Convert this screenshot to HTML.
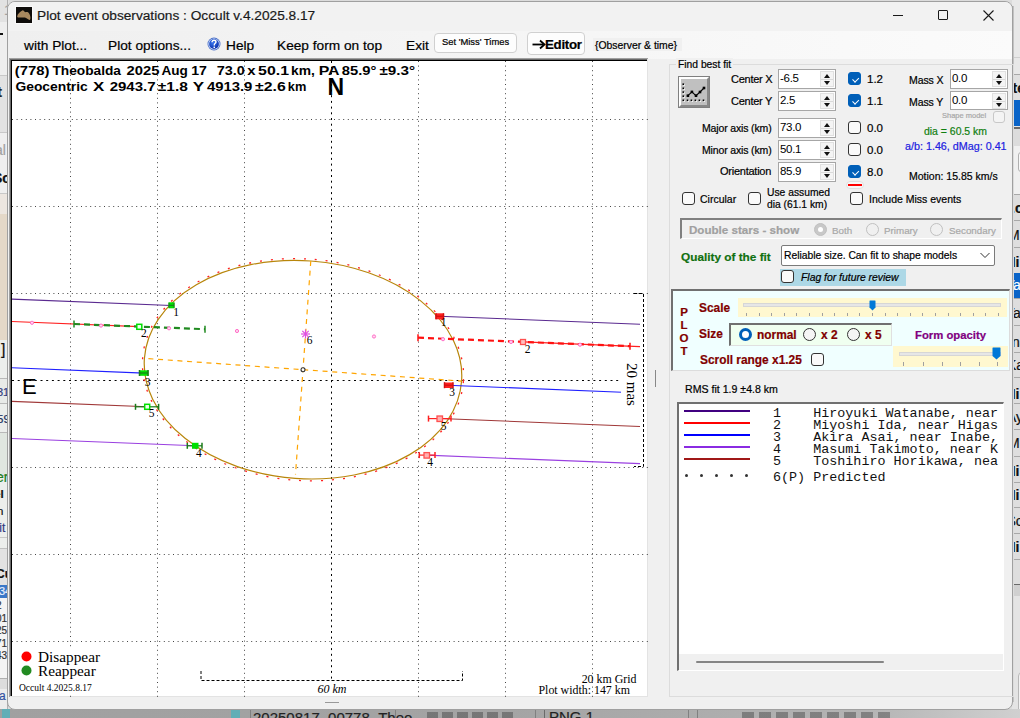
<!DOCTYPE html>
<html><head><meta charset="utf-8">
<style>
*{margin:0;padding:0;box-sizing:border-box}
html,body{width:1020px;height:718px;overflow:hidden;background:#dcdcdc;font-family:"Liberation Sans",sans-serif;position:relative}
.a{position:absolute;white-space:nowrap}
.t{position:absolute;white-space:nowrap;font-family:"Liberation Sans",sans-serif;color:#000;line-height:1;-webkit-text-stroke:0.2px currentColor}
.num{position:absolute;background:#fff;border:1px solid #a6a6a6;height:20px;width:58px}
.num .v{position:absolute;left:1px;top:3px;font-size:11.5px;letter-spacing:-0.3px;line-height:1}
.num .sp{position:absolute;left:41px;top:1px;width:14px;height:16px;background:#f4f4f4;border:1px solid #e0e0e0}
.num .sp i{position:absolute;left:2.5px;width:0;height:0;border-left:3.5px solid transparent;border-right:3.5px solid transparent}
.num .sp i.u{top:2px;border-bottom:4px solid #111}
.num .sp i.d{top:9px;border-top:4px solid #111}
.num .sp b{position:absolute;left:0;top:6.5px;width:12px;height:1px;background:#dadada}
.cb{position:absolute;width:13px;height:13px;border:1px solid #333;border-radius:3px;background:#fafafa}
.cb.on{background:#005fb8;border-color:#005fb8}
.cb.on::after{content:"";position:absolute;left:3px;top:1.5px;width:5px;height:3px;border-left:1.3px solid #fff;border-bottom:1.3px solid #fff;transform:rotate(-45deg) translate(-1px,2px)}
.rb{position:absolute;width:13px;height:13px;border:1px solid #333;border-radius:50%;background:#f5f5f5}
</style></head><body>
<!-- background strips -->
<div class="a" style="left:0;top:0;width:9px;height:22px;background:#e2e2e2"></div>
<div class="t" style="left:4px;top:2px;font-size:15px;color:#a0a0a0">1</div>
<div class="a" style="left:0;top:22px;width:9px;height:53px;background:#eeeeee"></div>
<div class="a" style="left:0;top:33px;width:3px;height:2px;background:#111"></div>
<div class="a" style="left:0;top:75px;width:9px;height:1px;background:#c8c8c8"></div>
<div class="a" style="left:0;top:76px;width:9px;height:56px;background:#e2e2e2;overflow:hidden"><div class="t" style="left:-3px;top:8px;font-size:15px;font-weight:bold;color:#222">t</div></div>
<div class="a" style="left:0;top:132px;width:9px;height:1px;background:#c8c8c8"></div>
<div class="a" style="left:0;top:133px;width:9px;height:60px;background:#efefef;overflow:hidden"><div class="t" style="left:-5px;top:10px;font-size:14px;color:#a0a0a0">al</div><div class="t" style="left:-7px;top:38px;font-size:14px;font-weight:bold;color:#111">Sc</div></div>
<div class="a" style="left:0;top:193px;width:9px;height:1px;background:#c8c8c8"></div>
<div class="a" style="left:0;top:214px;width:9px;height:126px;background:#e4d8c8"></div>
<div class="a" style="left:0;top:194px;width:9px;height:20px;background:#ece6e0"></div>
<div class="a" style="left:0;top:340px;width:8px;height:378px;background:#eceeec;overflow:hidden">
 <div class="t" style="left:1px;top:2px;font-size:16px;color:#111">]</div>
 <div class="a" style="left:0;top:38px;width:8px;height:1px;background:#b8b8b8"></div>
 <div class="a" style="left:0;top:39px;width:8px;height:25px;background:#e8eae8"></div>
 <div class="t" style="left:-3px;top:47px;font-size:11px;color:#303a80">31</div>
 <div class="a" style="left:0;top:63px;width:8px;height:1px;background:#b8b8b8"></div>
 <div class="t" style="left:-3px;top:74px;font-size:11.5px;color:#203060">59</div>
 <div class="a" style="left:0;top:92px;width:8px;height:1px;background:#b8b8b8"></div>
 <div class="a" style="left:0;top:93px;width:8px;height:42px;background:#e0e6e0"></div>
 <div class="a" style="left:0;top:135px;width:8px;height:1px;background:#b0b0b0"></div>
 <div class="t" style="left:-4px;top:130px;font-size:14px;color:#208020">er</div>
 <div class="t" style="left:-6px;top:149px;font-size:11.5px;font-weight:bold;color:#111">el</div>
 <div class="t" style="left:-3px;top:166px;font-size:11.5px;color:#111">n</div>
 <div class="t" style="left:-6px;top:182px;font-size:12px;color:#303a80">llit</div>
 <div class="a" style="left:0;top:197px;width:8px;height:1px;background:#c8c8c8"></div>
 <div class="a" style="left:0;top:209px;width:8px;height:36px;background:#e2e2e2"></div>
 <div class="a" style="left:0;top:208px;width:8px;height:1px;background:#c0c0c0"></div>
 <div class="t" style="left:-4px;top:228px;font-size:12px;font-weight:bold;color:#111">Cu</div>
 <div class="a" style="left:0;top:245px;width:8px;height:13px;background:#3a78c8;overflow:hidden"><div class="t" style="left:-1px;top:1px;font-size:11px;color:#e8f0ff">34</div></div>
 <div class="a" style="left:0;top:258px;width:8px;height:80px;background:#f4f4f4;overflow:hidden"><div class="t" style="left:-4px;top:2px;font-size:10px;line-height:12.5px;color:#333;white-space:pre">2
01
25
71
43</div></div>
 <div class="a" style="left:0;top:338px;width:8px;height:1px;background:#b0b0b0"></div>
 <div class="a" style="left:0;top:339px;width:8px;height:10px;background:#dcdcdc"></div>
 <div class="a" style="left:0;top:349px;width:8px;height:20px;background:#ececec;overflow:hidden"><div class="t" style="left:-1px;top:1px;font-size:12px;color:#3050a0">a</div></div>
</div>
<div class="a" style="left:7px;top:0;width:1px;height:709px;background:#b0b0b0"></div>

<div class="a" style="left:1012px;top:0;width:8px;height:718px;background:#e6e6e6"></div>
<div class="a" style="left:1012px;top:0;width:8px;height:718px;overflow:hidden">
 <div class="a" style="left:0;top:0;width:8px;height:74px;background:#e8e8e8"></div>
 <div class="a" style="left:0;top:57px;width:8px;height:1px;background:#cfcfcf"></div>
 <div class="a" style="left:0;top:74px;width:8px;height:1px;background:#a8a8a8"></div>
 <div class="a" style="left:0;top:75px;width:8px;height:25px;background:#e0e0e0"></div>
 <div class="t" style="left:0.5px;top:80.6px;font-size:14px;font-weight:bold;color:#111">te</div>
 <div class="a" style="left:0;top:100px;width:8px;height:26px;background:#0a64c8"></div>
 <div class="a" style="left:0;top:127px;width:8px;height:2px;background:#6a6a6a"></div>
 <div class="a" style="left:0;top:129px;width:8px;height:17px;background:#dcdcdc"></div>
 <div class="a" style="left:0;top:146px;width:8px;height:48px;background:#f0f0f0"></div>
 <div class="a" style="left:6px;top:152px;width:6px;height:20px;border:1px solid #b0b0b0;border-radius:3px;background:#f8f8f8"></div>
 <div class="a" style="left:0;top:194px;width:8px;height:390px;background:#dedede"></div>
 <div class="a" style="left:0;top:194px;width:8px;height:1px;background:#a8a8a8"></div>
 <div class="a" style="left:0;top:220px;width:8px;height:1px;background:#a8a8a8"></div>
 <div class="a" style="left:0;top:247px;width:8px;height:1px;background:#a8a8a8"></div>
 <div class="a" style="left:0;top:325px;width:8px;height:1px;background:#a8a8a8"></div>
 <div class="a" style="left:0;top:352px;width:8px;height:1px;background:#a8a8a8"></div>
 <div class="a" style="left:0;top:377px;width:8px;height:1px;background:#a8a8a8"></div>
 <div class="a" style="left:0;top:403px;width:8px;height:1px;background:#a8a8a8"></div>
 <div class="a" style="left:0;top:429px;width:8px;height:1px;background:#a8a8a8"></div>
 <div class="a" style="left:0;top:456px;width:8px;height:1px;background:#a8a8a8"></div>
 <div class="a" style="left:0;top:482px;width:8px;height:1px;background:#a8a8a8"></div>
 <div class="a" style="left:0;top:507px;width:8px;height:1px;background:#a8a8a8"></div>
 <div class="a" style="left:0;top:533px;width:8px;height:1px;background:#a8a8a8"></div>
 <div class="a" style="left:0;top:559px;width:8px;height:1px;background:#a8a8a8"></div>
 <div class="a" style="left:0;top:273px;width:8px;height:25px;background:#0a64c8"></div>
 <div class="a" style="left:0;top:298px;width:8px;height:1px;background:#a8a8a8"></div>
 <div class="t" style="left:-1px;top:201px;font-size:14px;font-weight:bold;color:#111">.c</div>
 <div class="t" style="left:-4px;top:228px;font-size:14px;color:#111">Mi</div>
 <div class="t" style="left:-6.5px;top:254.6px;font-size:14px;font-weight:bold;color:#111">Hi</div>
 <div class="t" style="left:-6px;top:278px;font-size:14px;color:#fff">Ta</div>
 <div class="t" style="left:-6px;top:305.7px;font-size:14px;color:#111">Ta</div>
 <div class="t" style="left:0px;top:334.6px;font-size:14px;color:#111">na</div>
 <div class="t" style="left:-5px;top:358px;font-size:14px;color:#111">Ka</div>
 <div class="t" style="left:-6.5px;top:387px;font-size:14px;font-weight:bold;color:#111">Hi</div>
 <div class="t" style="left:-5px;top:409.8px;font-size:14px;color:#111">Ay</div>
 <div class="t" style="left:-4px;top:436px;font-size:14px;color:#111">Mi</div>
 <div class="t" style="left:-6.5px;top:464px;font-size:14px;font-weight:bold;color:#111">Hi</div>
 <div class="t" style="left:-6.5px;top:488px;font-size:14px;font-weight:bold;color:#111">Hi</div>
 <div class="t" style="left:-5.5px;top:514px;font-size:14px;color:#111">Sc</div>
 <div class="t" style="left:-6.5px;top:540px;font-size:14px;font-weight:bold;color:#111">Hi</div>
 <div class="a" style="left:0;top:584px;width:8px;height:1px;background:#6a6a6a"></div>
 <div class="a" style="left:0;top:585px;width:8px;height:11px;background:#d0d0d0"></div>
 <div class="a" style="left:0;top:596px;width:8px;height:122px;background:#e4e4e4"></div>
 <div class="a" style="left:6px;top:672px;width:8px;height:50px;border:1px solid #b8b8b8;border-radius:4px;background:#f2f2f2"></div>
</div>
<div class="a" style="left:1012px;top:6px;width:2px;height:696px;background:linear-gradient(90deg,#9a9a9a,#cfcfcf)"></div>

<div class="a" style="left:0;top:709px;width:1020px;height:9px;background:linear-gradient(90deg,#a0a0a0 0%,#a4a4a4 50%,#b4b4b4 85%,#d0d0d0 100%)"></div>
<div class="a" style="left:2px;top:709px;width:8px;height:9px;background:#62aeb6"></div>
<div class="a" style="left:231px;top:709px;width:9px;height:9px;background:#62aeb6"></div>
<div class="a" style="left:250px;top:709px;width:1px;height:9px;background:#808080"></div>
<div class="a" style="left:0;top:709px;width:1020px;height:9px;overflow:hidden">
 <div class="t" style="left:253px;top:1px;font-size:15px;color:#222">20250817_00778_Theo</div>
 <div class="a" style="left:395px;top:0;width:1px;height:9px;background:#808080"></div>
 <div class="a" style="left:427px;top:3px;width:88px;height:6px;background:repeating-linear-gradient(90deg,#222 0 11px,transparent 11px 15px);opacity:0.35"></div>
 <div class="a" style="left:535px;top:0;width:1px;height:9px;background:#808080"></div>
 <div class="a" style="left:544px;top:0;width:1px;height:9px;background:#6a6a6a"></div>
 <div class="t" style="left:549px;top:0px;font-size:15px;color:#222">PNG 1</div>
 <div class="a" style="left:688px;top:0;width:1px;height:9px;background:#808080"></div>
 <div class="a" style="left:697px;top:0;width:1px;height:9px;background:#808080"></div>
 <div class="a" style="left:742px;top:3px;width:150px;height:6px;background:repeating-linear-gradient(90deg,#222 0 12px,transparent 12px 17px);opacity:0.35"></div>
</div>

<!-- window -->
<div class="a" id="win" style="left:7px;top:1px;width:1006px;height:709px;background:#f0f0f0;border:1px solid #a0a0a0;border-radius:8px;overflow:hidden">
  <div class="a" style="left:0;top:0;width:1006px;height:29px;background:#f2f2f2"></div>
  <div class="a" style="left:0;top:29px;width:1006px;height:28px;background:linear-gradient(90deg,#efefef,#fbfbfb)"></div>
</div>
<!-- title bar -->
<div class="a" style="left:15px;top:6px;width:18px;height:18px;background:#fafafa"></div><div class="a" style="left:16px;top:7px;width:16px;height:16px;background:#0e0c0a"></div>
<svg class="a" style="left:16px;top:7px" width="16" height="16" viewBox="0 0 16 16"><path d="M1.2 9.3C1.5 7 4 5 6.7 3.3C7.5 3.5 8.5 4.5 9.2 5.3C10 4.8 11 4.8 11.6 5.1C13 6 14.2 8 14.4 10.2C14.5 11.5 14.2 12.8 13.8 13C12 12.5 10.5 11 8.9 10.5C7 10.5 4 10.7 2.1 10.5C1.3 10.3 1.1 9.8 1.2 9.3Z" fill="#a8885e"/></svg>
<div class="t" style="left:37px;top:9px;font-size:13.7px;color:#1a1a1a">Plot event observations : Occult v.4.2025.8.17</div>
<div class="a" style="left:893px;top:15px;width:10px;height:1px;background:#1a1a1a"></div>
<div class="a" style="left:938px;top:10px;width:10px;height:10px;border:1px solid #1a1a1a;border-radius:1px"></div>
<svg class="a" style="left:982px;top:9px" width="13" height="13" viewBox="0 0 13 13"><path d="M1.5 1.5L11.5 11.5M11.5 1.5L1.5 11.5" stroke="#1a1a1a" stroke-width="1.1"/></svg>
<!-- menu -->
<div class="t" style="left:24px;top:39px;font-size:13.7px">with Plot...</div>
<div class="t" style="left:108px;top:39px;font-size:13.7px">Plot options...</div>
<svg class="a" style="left:207px;top:37px" width="14" height="14" viewBox="0 0 14 14"><defs><radialGradient id="hg" cx="0.4" cy="0.35" r="0.7"><stop offset="0" stop-color="#3a78f0"/><stop offset="1" stop-color="#0a2ea8"/></radialGradient></defs><circle cx="7" cy="7" r="6.5" fill="#4a70c8"/><circle cx="7" cy="7" r="5.6" fill="#e8f0ff"/><circle cx="7" cy="7" r="4.9" fill="url(#hg)"/><path d="M5 5.3C5 3.9 6 3.3 7 3.3C8.2 3.3 9 4 9 5C9 6.2 7.4 6.4 7.3 7.8V8.6" fill="none" stroke="#fff" stroke-width="1.4"/><rect x="6.5" y="9.6" width="1.5" height="1.5" fill="#fff"/></svg>
<div class="t" style="left:226px;top:39px;font-size:13.7px">Help</div>
<div class="t" style="left:277px;top:39px;font-size:13.7px">Keep form on top</div>
<div class="t" style="left:406px;top:39px;font-size:13.7px">Exit</div>
<div class="a" style="left:434px;top:33px;width:83px;height:20px;background:#fdfdfd;border:1px solid #d0d0d0;border-radius:4px"></div>
<div class="t" style="left:442px;top:37px;font-size:9.4px">Set 'Miss' Times</div>
<div class="a" style="left:527px;top:32px;width:58px;height:23px;background:#fdfdfd;border:1px solid #d0d0d0;border-radius:4px"></div>
<svg class="a" style="left:532px;top:38px" width="14" height="12" viewBox="0 0 14 12"><path d="M0.5 6.5H11" stroke="#000" stroke-width="1.8"/><path d="M8 2.5L12.5 6.5L8 10.5" fill="none" stroke="#000" stroke-width="1.8"/></svg><div class="t" style="left:545px;top:38px;font-size:13.3px;font-weight:bold;letter-spacing:-0.3px">Editor</div>
<div class="a" style="left:593px;top:38px;width:89px;height:13px;background:#f0f0f0"></div>
<div class="t" style="left:595px;top:40.5px;font-size:10.4px">{Observer &amp; time}</div>

<!-- plot area -->
<div class="a" style="left:9px;top:58px;width:639px;height:639px;background:#fff;border-top:1px solid #a0a0a0;border-left:1px solid #a0a0a0"></div><div class="a" style="left:10px;top:59px;width:638px;height:638px;border-top:1px solid #696969;border-left:1px solid #696969"></div><div class="a" style="left:11px;top:60px;width:637px;height:637px;border-top:1px solid #000;border-left:1px solid #000"></div>
<div class="a" style="left:647px;top:59px;width:1px;height:638px;background:#e3e3e3"></div>
<div class="a" style="left:10px;top:696px;width:638px;height:1px;background:#e3e3e3"></div>
<div class="a" style="left:655px;top:370px;width:1px;height:17px;background:#888"></div>
<div class="a" style="left:325px;top:702px;width:14px;height:1px;background:#999"></div>

<svg class="a" style="left:0;top:0" width="1020" height="718" viewBox="0 0 1020 718"><defs><clipPath id="pc"><rect x="12" y="61" width="636" height="636"/></clipPath></defs>
<g clip-path="url(#pc)">
<line x1="70.5" y1="61" x2="70.5" y2="697" stroke="#454545" stroke-width="1" stroke-dasharray="1 3.6"/>
<line x1="157.5" y1="61" x2="157.5" y2="697" stroke="#454545" stroke-width="1" stroke-dasharray="1 3.6"/>
<line x1="244.5" y1="61" x2="244.5" y2="697" stroke="#454545" stroke-width="1" stroke-dasharray="1 3.6"/>
<line x1="418.5" y1="61" x2="418.5" y2="697" stroke="#454545" stroke-width="1" stroke-dasharray="1 3.6"/>
<line x1="505.5" y1="61" x2="505.5" y2="697" stroke="#454545" stroke-width="1" stroke-dasharray="1 3.6"/>
<line x1="592.5" y1="61" x2="592.5" y2="697" stroke="#454545" stroke-width="1" stroke-dasharray="1 3.6"/>
<line x1="12" y1="119.5" x2="648" y2="119.5" stroke="#454545" stroke-width="1" stroke-dasharray="1 3.6"/>
<line x1="12" y1="206.5" x2="648" y2="206.5" stroke="#454545" stroke-width="1" stroke-dasharray="1 3.6"/>
<line x1="12" y1="293.5" x2="648" y2="293.5" stroke="#454545" stroke-width="1" stroke-dasharray="1 3.6"/>
<line x1="12" y1="467.5" x2="648" y2="467.5" stroke="#454545" stroke-width="1" stroke-dasharray="1 3.6"/>
<line x1="12" y1="554.5" x2="648" y2="554.5" stroke="#454545" stroke-width="1" stroke-dasharray="1 3.6"/>
<line x1="12" y1="641.5" x2="648" y2="641.5" stroke="#454545" stroke-width="1" stroke-dasharray="1 3.6"/>
<line x1="331.5" y1="61" x2="331.5" y2="680" stroke="#000" stroke-width="1" stroke-dasharray="2 3.7"/>
<line x1="12" y1="380.5" x2="642" y2="380.5" stroke="#000" stroke-width="1" stroke-dasharray="2 3.7"/>
</g>
<g transform="translate(303 369.7) rotate(4.1)">
<ellipse cx="0" cy="0" rx="160.8" ry="110.8" fill="none" stroke="#ff2020" stroke-width="1.3" stroke-dasharray="2 9"/>
<ellipse cx="0" cy="0" rx="159" ry="109" fill="none" stroke="#b8860b" stroke-width="1.2"/>
<line x1="-155" y1="0" x2="159" y2="0" stroke="#ffa500" stroke-width="1.2" stroke-dasharray="5 4.7"/>
<line x1="0" y1="-109" x2="0" y2="105" stroke="#ffa500" stroke-width="1.2" stroke-dasharray="5 4.7"/>
<circle cx="0" cy="0" r="2" fill="#fff" stroke="#333" stroke-width="1.1"/>
</g>
<line x1="12" y1="299.1" x2="171" y2="305.5" stroke="#5a2a90" stroke-width="1.1"/>
<line x1="439" y1="316.2" x2="640" y2="324.2" stroke="#5a2a90" stroke-width="1.1"/>
<line x1="12" y1="321.5" x2="139" y2="326.6" stroke="#ff2020" stroke-width="1.1"/>
<line x1="523" y1="341.9" x2="640" y2="346.6" stroke="#ff2020" stroke-width="1.1"/>
<line x1="12" y1="367.8" x2="144" y2="373.1" stroke="#2020ff" stroke-width="1.1"/>
<line x1="447" y1="385.2" x2="622" y2="392.2" stroke="#2020ff" stroke-width="1.1"/>
<line x1="12" y1="438.5" x2="195" y2="445.8" stroke="#9a40e0" stroke-width="1.1"/>
<line x1="426" y1="455.1" x2="640" y2="463.6" stroke="#9a40e0" stroke-width="1.1"/>
<line x1="12" y1="401.4" x2="147" y2="406.8" stroke="#a03838" stroke-width="1.1"/>
<line x1="440" y1="418.5" x2="640" y2="426.5" stroke="#a03838" stroke-width="1.1"/>
<line x1="74" y1="324.0" x2="205" y2="329.2" stroke="#208a20" stroke-width="2.2" stroke-dasharray="6 4"/>
<line x1="74" y1="320.5" x2="74" y2="327.5" stroke="#208a20" stroke-width="1.5"/>
<line x1="205" y1="325.7" x2="205" y2="332.7" stroke="#208a20" stroke-width="1.5"/>
<line x1="418" y1="337.7" x2="630" y2="346.2" stroke="#ff1010" stroke-width="2.2" stroke-dasharray="6 4"/>
<line x1="418" y1="334.2" x2="418" y2="341.2" stroke="#ff1010" stroke-width="1.5"/>
<line x1="630" y1="342.7" x2="630" y2="349.7" stroke="#ff1010" stroke-width="1.5"/>
<circle cx="32" cy="322.8" r="1.6" fill="#ffd8f0" stroke="#ff70c8" stroke-width="1"/>
<circle cx="101" cy="325.6" r="1.6" fill="#ffd8f0" stroke="#ff70c8" stroke-width="1"/>
<circle cx="169" cy="328.3" r="1.6" fill="#ffd8f0" stroke="#ff70c8" stroke-width="1"/>
<circle cx="237" cy="331.0" r="1.6" fill="#ffd8f0" stroke="#ff70c8" stroke-width="1"/>
<circle cx="374" cy="336.5" r="1.6" fill="#ffd8f0" stroke="#ff70c8" stroke-width="1"/>
<circle cx="443" cy="339.2" r="1.6" fill="#ffd8f0" stroke="#ff70c8" stroke-width="1"/>
<circle cx="511" cy="342.0" r="1.6" fill="#ffd8f0" stroke="#ff70c8" stroke-width="1"/>
<circle cx="580" cy="344.7" r="1.6" fill="#ffd8f0" stroke="#ff70c8" stroke-width="1"/>
<rect x="168.5" y="302.3" width="6" height="6" fill="#00e000"/><line x1="169.0" y1="302.8" x2="169.0" y2="307.8" stroke="#1a7a1a" stroke-width="1"/><line x1="174.0" y1="302.8" x2="174.0" y2="307.8" stroke="#1a7a1a" stroke-width="1"/><line x1="169.0" y1="305.3" x2="174.0" y2="305.3" stroke="#1a7a1a" stroke-width="1"/>
<rect x="136.8" y="324.3" width="5" height="5" fill="#f0fff0" stroke="#00e000" stroke-width="1.5"/>
<rect x="139" y="370.3" width="9.5" height="5.5" fill="#00e000"/>
<line x1="139.5" y1="370" x2="139.5" y2="376" stroke="#1a7a1a" stroke-width="1.5"/><line x1="148" y1="370" x2="148" y2="376" stroke="#1a7a1a" stroke-width="1.5"/><line x1="139.5" y1="373" x2="148" y2="373" stroke="#1a7a1a" stroke-width="1.2"/>
<line x1="135.5" y1="403.8" x2="135.5" y2="409.8" stroke="#1a7a1a" stroke-width="1.5"/><line x1="158.6" y1="403.8" x2="158.6" y2="409.8" stroke="#1a7a1a" stroke-width="1.5"/><line x1="135.5" y1="406.8" x2="158.6" y2="406.8" stroke="#1a7a1a" stroke-width="1.2"/>
<rect x="144.7" y="404.3" width="5" height="5" fill="#f0fff0" stroke="#00e000" stroke-width="1.5"/>
<line x1="187.3" y1="442.8" x2="187.3" y2="448.8" stroke="#1a7a1a" stroke-width="1.5"/><line x1="202" y1="442.8" x2="202" y2="448.8" stroke="#1a7a1a" stroke-width="1.5"/><line x1="187.3" y1="445.8" x2="202" y2="445.8" stroke="#1a7a1a" stroke-width="1.2"/>
<rect x="192" y="442.8" width="6.5" height="6" fill="#00e000"/>
<rect x="435.5" y="313.3" width="8.5" height="6" fill="#ff2020"/>
<line x1="436" y1="313.3" x2="436" y2="319.3" stroke="#d01010" stroke-width="1.5"/><line x1="443.5" y1="313.3" x2="443.5" y2="319.3" stroke="#d01010" stroke-width="1.5"/><line x1="436" y1="316.3" x2="443.5" y2="316.3" stroke="#d01010" stroke-width="1.2"/>
<rect x="520.5" y="339.5" width="5" height="5" fill="#ffc0c0" stroke="#ff5050" stroke-width="1.3"/>
<rect x="444" y="382.5" width="9" height="5.5" fill="#ff2020"/>
<line x1="444.5" y1="382.2" x2="444.5" y2="388.2" stroke="#d01010" stroke-width="1.5"/><line x1="453" y1="382.2" x2="453" y2="388.2" stroke="#d01010" stroke-width="1.5"/><line x1="444.5" y1="385.2" x2="453" y2="385.2" stroke="#d01010" stroke-width="1.2"/>
<line x1="428.5" y1="415.6" x2="428.5" y2="421.6" stroke="#ff2020" stroke-width="1.5"/><line x1="451" y1="415.6" x2="451" y2="421.6" stroke="#ff2020" stroke-width="1.5"/><line x1="428.5" y1="418.6" x2="451" y2="418.6" stroke="#ff2020" stroke-width="1.2"/>
<rect x="437" y="416" width="5.5" height="5.5" fill="#ffb0b0" stroke="#ff5050" stroke-width="1.3"/>
<line x1="419.3" y1="452.1" x2="419.3" y2="458.1" stroke="#ff2020" stroke-width="1.5"/><line x1="435" y1="452.1" x2="435" y2="458.1" stroke="#ff2020" stroke-width="1.5"/><line x1="419.3" y1="455.1" x2="435" y2="455.1" stroke="#ff2020" stroke-width="1.2"/>
<rect x="424" y="452.6" width="5.5" height="5.5" fill="#ffb0b0" stroke="#ff5050" stroke-width="1.3"/>
<text x="176" y="316" font-family="Liberation Serif" font-size="11.5" text-anchor="middle" fill="#000">1</text>
<text x="143.8" y="337" font-family="Liberation Serif" font-size="11.5" text-anchor="middle" fill="#000">2</text>
<text x="147.5" y="385.5" font-family="Liberation Serif" font-size="11.5" text-anchor="middle" fill="#000">3</text>
<text x="151.5" y="416.5" font-family="Liberation Serif" font-size="11.5" text-anchor="middle" fill="#000">5</text>
<text x="198.8" y="457" font-family="Liberation Serif" font-size="11.5" text-anchor="middle" fill="#000">4</text>
<text x="443.5" y="326" font-family="Liberation Serif" font-size="11.5" text-anchor="middle" fill="#000">1</text>
<text x="527.5" y="353" font-family="Liberation Serif" font-size="11.5" text-anchor="middle" fill="#000">2</text>
<text x="452" y="396" font-family="Liberation Serif" font-size="11.5" text-anchor="middle" fill="#000">3</text>
<text x="443.5" y="429.5" font-family="Liberation Serif" font-size="11.5" text-anchor="middle" fill="#000">5</text>
<text x="430" y="466" font-family="Liberation Serif" font-size="11.5" text-anchor="middle" fill="#000">4</text>
<text x="309.5" y="343.5" font-family="Liberation Serif" font-size="11.5" text-anchor="middle" fill="#000">6</text>
<line x1="301.0" y1="334.0" x2="310.0" y2="334.0" stroke="#e050e0" stroke-width="1.2"/>
<line x1="302.3" y1="330.8" x2="308.7" y2="337.2" stroke="#e050e0" stroke-width="1.2"/>
<line x1="305.5" y1="329.5" x2="305.5" y2="338.5" stroke="#e050e0" stroke-width="1.2"/>
<line x1="308.7" y1="330.8" x2="302.3" y2="337.2" stroke="#e050e0" stroke-width="1.2"/>
<rect x="621" y="358" width="21.5" height="51" fill="#fff"/>
<polyline points="634,293.5 643.5,293.5 643.5,466.5 634,466.5" fill="none" stroke="#000" stroke-width="1" stroke-dasharray="3 2"/>
<text transform="translate(627 363) rotate(90)" font-family="Liberation Serif" font-size="15" fill="#000">20 mas</text>
<polyline points="201,671 201,680.5 462.5,680.5 462.5,671" fill="none" stroke="#000" stroke-width="1" stroke-dasharray="3 2"/>
<rect x="16" y="649" width="86" height="45" fill="#fff"/>
<circle cx="26.5" cy="656.5" r="5" fill="#ff0000"/>
<circle cx="26.5" cy="670.5" r="5" fill="#228b22"/>
<text x="38" y="661.5" font-family="Liberation Serif" font-size="15.3" fill="#000">Disappear</text>
<text x="38" y="675.5" font-family="Liberation Serif" font-size="15.3" fill="#000">Reappear</text>
<text x="19" y="691.3" font-family="Liberation Serif" font-size="9.5" fill="#000">Occult 4.2025.8.17</text>
<text x="332" y="692.8" font-family="Liberation Serif" font-style="italic" font-size="12" text-anchor="middle" fill="#000">60 km</text>
<text x="636.5" y="682.8" font-family="Liberation Serif" font-size="11.9" text-anchor="end" fill="#000">20 km Grid</text>
<text x="630" y="693.5" font-family="Liberation Serif" font-size="11.9" text-anchor="end" fill="#000">Plot width: 147 km</text>
<text x="22" y="393.5" font-family="Liberation Sans" font-size="22" fill="#000">E</text>
<text x="327.5" y="95" font-family="Liberation Sans" font-weight="bold" font-size="23" fill="#000">N</text>
<text x="14.8" y="75.3" font-family="Liberation Sans" font-weight="bold" font-size="12.6" textLength="34.6" lengthAdjust="spacingAndGlyphs" fill="#000">(778)</text>
<text x="52.5" y="75.3" font-family="Liberation Sans" font-weight="bold" font-size="12.6" textLength="68.5" lengthAdjust="spacingAndGlyphs" fill="#000">Theobalda</text>
<text x="126.5" y="75.3" font-family="Liberation Sans" font-weight="bold" font-size="12.6" textLength="32.9" lengthAdjust="spacingAndGlyphs" fill="#000">2025</text>
<text x="161.5" y="75.3" font-family="Liberation Sans" font-weight="bold" font-size="12.6" textLength="26.4" lengthAdjust="spacingAndGlyphs" fill="#000">Aug</text>
<text x="191.2" y="75.3" font-family="Liberation Sans" font-weight="bold" font-size="12.6" textLength="15.7" lengthAdjust="spacingAndGlyphs" fill="#000">17</text>
<text x="216.7" y="75.3" font-family="Liberation Sans" font-weight="bold" font-size="12.6" textLength="28.1" lengthAdjust="spacingAndGlyphs" fill="#000">73.0</text>
<text x="247.3" y="75.3" font-family="Liberation Sans" font-weight="bold" font-size="12.6" textLength="8.3" lengthAdjust="spacingAndGlyphs" fill="#000">x</text>
<text x="258.1" y="75.3" font-family="Liberation Sans" font-weight="bold" font-size="12.6" textLength="30.9" lengthAdjust="spacingAndGlyphs" fill="#000">50.1</text>
<text x="291.1" y="75.3" font-family="Liberation Sans" font-weight="bold" font-size="12.6" textLength="23.8" lengthAdjust="spacingAndGlyphs" fill="#000">km,</text>
<text x="318.7" y="75.3" font-family="Liberation Sans" font-weight="bold" font-size="12.6" textLength="20.9" lengthAdjust="spacingAndGlyphs" fill="#000">PA</text>
<text x="341.8" y="75.3" font-family="Liberation Sans" font-weight="bold" font-size="12.6" textLength="34.6" lengthAdjust="spacingAndGlyphs" fill="#000">85.9°</text>
<text x="379.5" y="75.3" font-family="Liberation Sans" font-weight="bold" font-size="12.6" textLength="35.7" lengthAdjust="spacingAndGlyphs" fill="#000">±9.3°</text>
<text x="15.4" y="90.8" font-family="Liberation Sans" font-weight="bold" font-size="12.6" textLength="72.4" lengthAdjust="spacingAndGlyphs" fill="#000">Geocentric</text>
<text x="93.1" y="90.8" font-family="Liberation Sans" font-weight="bold" font-size="12.6" textLength="11.3" lengthAdjust="spacingAndGlyphs" fill="#000">X</text>
<text x="109.7" y="90.8" font-family="Liberation Sans" font-weight="bold" font-size="12.6" textLength="45.9" lengthAdjust="spacingAndGlyphs" fill="#000">2943.7</text>
<text x="157.8" y="90.8" font-family="Liberation Sans" font-weight="bold" font-size="12.6" textLength="30.1" lengthAdjust="spacingAndGlyphs" fill="#000">±1.8</text>
<text x="192.7" y="90.8" font-family="Liberation Sans" font-weight="bold" font-size="12.6" textLength="11.4" lengthAdjust="spacingAndGlyphs" fill="#000">Y</text>
<text x="206.9" y="90.8" font-family="Liberation Sans" font-weight="bold" font-size="12.6" textLength="45.5" lengthAdjust="spacingAndGlyphs" fill="#000">4913.9</text>
<text x="255.1" y="90.8" font-family="Liberation Sans" font-weight="bold" font-size="12.6" textLength="30.7" lengthAdjust="spacingAndGlyphs" fill="#000">±2.6</text>
<text x="287.8" y="90.8" font-family="Liberation Sans" font-weight="bold" font-size="12.6" textLength="18.5" lengthAdjust="spacingAndGlyphs" fill="#000">km</text></svg>

<!-- groupbox -->
<div class="a" style="left:669px;top:64px;width:345px;height:633px;border:1px solid #dcdcdc;border-radius:0"></div>
<div class="a" style="left:676px;top:58px;width:57px;height:12px;background:#f0f0f0"></div>
<div class="t" style="left:678px;top:60px;font-size:10.3px">Find best fit</div>
<!-- find button -->
<svg class="a" style="left:678px;top:76px" width="32" height="32" viewBox="0 0 32 32">
<rect x="0" y="0" width="32" height="32" fill="#808080"/>
<rect x="1" y="1" width="30" height="30" fill="#fff"/>
<path d="M31 1V31H1Z" fill="#888"/>
<rect x="3" y="3" width="26" height="26" fill="#c0c0c0"/>
<rect x="5.3" y="8.2" width="1.6" height="1.6" fill="#fff"/><rect x="4.5" y="7.4" width="1.6" height="1.6" fill="#000"/>
<rect x="5.3" y="12.3" width="1.6" height="1.6" fill="#fff"/><rect x="4.5" y="11.5" width="1.6" height="1.6" fill="#000"/>
<rect x="5.3" y="16.1" width="1.6" height="1.6" fill="#fff"/><rect x="4.5" y="15.3" width="1.6" height="1.6" fill="#000"/>
<rect x="5.3" y="20.2" width="1.6" height="1.6" fill="#fff"/><rect x="4.5" y="19.4" width="1.6" height="1.6" fill="#000"/>
<rect x="5.3" y="24.3" width="1.6" height="1.6" fill="#fff"/><rect x="4.5" y="23.5" width="1.6" height="1.6" fill="#000"/>
<rect x="9.5" y="24.3" width="1.6" height="1.6" fill="#fff"/><rect x="8.7" y="23.5" width="1.6" height="1.6" fill="#000"/>
<rect x="13.4" y="24.3" width="1.6" height="1.6" fill="#fff"/><rect x="12.6" y="23.5" width="1.6" height="1.6" fill="#000"/>
<rect x="17.4" y="24.3" width="1.6" height="1.6" fill="#fff"/><rect x="16.6" y="23.5" width="1.6" height="1.6" fill="#000"/>
<rect x="21.4" y="24.3" width="1.6" height="1.6" fill="#fff"/><rect x="20.6" y="23.5" width="1.6" height="1.6" fill="#000"/>
<rect x="25.5" y="24.3" width="1.6" height="1.6" fill="#fff"/><rect x="24.7" y="23.5" width="1.6" height="1.6" fill="#000"/>
<polyline points="9.9,19.7 13.9,15.9 18,19.7 22,16 26,12" fill="none" stroke="#000" stroke-width="1.1"/>
<rect x="8.6" y="18.4" width="2.6" height="2.6" fill="#000"/>
<rect x="12.6" y="14.6" width="2.6" height="2.6" fill="#000"/>
<rect x="16.7" y="18.4" width="2.6" height="2.6" fill="#000"/>
<rect x="20.7" y="14.7" width="2.6" height="2.6" fill="#000"/>
<rect x="24.7" y="10.7" width="2.6" height="2.6" fill="#000"/>
</svg>
<!-- labels -->
<div class="t" style="left:731px;top:74px;font-size:11px;letter-spacing:-0.25px">Center X</div>
<div class="t" style="left:731px;top:96px;font-size:11px;letter-spacing:-0.25px">Center Y</div>
<div class="t" style="left:702px;top:123px;font-size:10.5px;letter-spacing:-0.15px">Major axis (km)</div>
<div class="t" style="left:702px;top:145px;font-size:10.5px;letter-spacing:-0.15px">Minor axis (km)</div>
<div class="t" style="left:720px;top:166px;font-size:11px;letter-spacing:-0.25px">Orientation</div>
<div class="num" style="left:778px;top:69px"><span class="v">-6.5</span><div class="sp"><i class="u"></i><b></b><i class="d"></i></div></div>
<div class="num" style="left:778px;top:91px"><span class="v">2.5</span><div class="sp"><i class="u"></i><b></b><i class="d"></i></div></div>
<div class="num" style="left:778px;top:118px"><span class="v">73.0</span><div class="sp"><i class="u"></i><b></b><i class="d"></i></div></div>
<div class="num" style="left:778px;top:140px"><span class="v">50.1</span><div class="sp"><i class="u"></i><b></b><i class="d"></i></div></div>
<div class="num" style="left:778px;top:162px"><span class="v">85.9</span><div class="sp"><i class="u"></i><b></b><i class="d"></i></div></div>
<div class="cb on" style="left:848px;top:72px"></div><div class="t" style="left:867px;top:74px;font-size:11.5px">1.2</div>
<div class="cb on" style="left:848px;top:94px"></div><div class="t" style="left:867px;top:96px;font-size:11.5px">1.1</div>
<div class="cb" style="left:848px;top:121px"></div><div class="t" style="left:867px;top:123px;font-size:11.5px">0.0</div>
<div class="cb" style="left:848px;top:143px"></div><div class="t" style="left:867px;top:145px;font-size:11.5px">0.0</div>
<div class="cb on" style="left:848px;top:165px"></div><div class="t" style="left:867px;top:167px;font-size:11.5px">8.0</div>
<div class="a" style="left:846px;top:181px;width:18px;height:8px;border:1px solid #e0e0e0;border-radius:4px;background:#f8f8f8"></div>
<div class="a" style="left:848px;top:184px;width:14px;height:2px;background:#ff0000"></div>
<div class="t" style="left:909px;top:75px;font-size:10.5px;letter-spacing:-0.1px">Mass X</div>
<div class="t" style="left:909px;top:97px;font-size:10.5px;letter-spacing:-0.1px">Mass Y</div>
<div class="num" style="left:950px;top:69px"><span class="v">0.0</span><div class="sp"><i class="u"></i><b></b><i class="d"></i></div></div>
<div class="num" style="left:950px;top:91px;height:19px"><span class="v">0.0</span><div class="sp"><i class="u"></i><b></b><i class="d"></i></div></div>
<div class="t" style="left:942px;top:112px;font-size:7.5px;color:#a8a8a8">Shape model</div>
<div class="cb" style="left:993px;top:111px;width:12px;height:12px;border-color:#c8c8c8;background:#f4f4f4"></div>
<div class="t" style="left:924px;top:127px;font-size:10.45px;color:#108010">dia = 60.5 km</div>
<div class="t" style="left:905px;top:141px;font-size:10.75px;color:#2020e0">a/b: 1.46, dMag: 0.41</div>
<div class="t" style="left:909px;top:171px;font-size:10.5px">Motion: 15.85 km/s</div>
<div class="cb" style="left:682px;top:192px"></div><div class="t" style="left:700px;top:194px;font-size:10.5px">Circular</div>
<div class="cb" style="left:748px;top:192px"></div><div class="t" style="left:767px;top:187px;font-size:10.3px;line-height:12px">Use assumed<br>dia (61.1 km)</div>
<div class="cb" style="left:850px;top:192px"></div><div class="t" style="left:869px;top:194px;font-size:10.5px">Include Miss events</div>
<!-- double stars -->
<div class="a" style="left:680px;top:218px;width:322px;height:21px;border-top:2px solid #808080;border-left:2px solid #808080;border-bottom:1px solid #fff;border-right:1px solid #fff"></div>
<div class="t" style="left:689px;top:224px;font-size:11.6px;font-weight:bold;color:#a0a0a0">Double stars - show</div>
<div class="rb" style="left:814px;top:223px;border-color:#c0c0c0;background:#c8c8c8"></div><div class="a" style="left:818px;top:227px;width:5px;height:5px;border-radius:50%;background:#fff"></div>
<div class="t" style="left:832px;top:226px;font-size:9.8px;color:#a8a8a8">Both</div>
<div class="rb" style="left:866px;top:223px;border-color:#c0c0c0;background:#f0f0f0"></div>
<div class="t" style="left:884px;top:226px;font-size:9.8px;color:#a8a8a8">Primary</div>
<div class="rb" style="left:930px;top:223px;border-color:#c0c0c0;background:#f0f0f0"></div>
<div class="t" style="left:949px;top:226px;font-size:9.8px;color:#a8a8a8">Secondary</div>
<!-- quality -->
<div class="t" style="left:681px;top:251.5px;font-size:11.8px;font-weight:bold;color:#107010">Quality of the fit</div>
<div class="a" style="left:781px;top:245px;width:214px;height:21px;background:#fff;border:1px solid #7a7a7a;border-radius:2px"></div>
<div class="t" style="left:784px;top:250.5px;font-size:10.35px">Reliable size. Can fit to shape models</div>
<svg class="a" style="left:979px;top:251px" width="12" height="8" viewBox="0 0 12 8"><path d="M1.5 2L6 6.5L10.5 2" fill="none" stroke="#333" stroke-width="1"/></svg>
<div class="a" style="left:780px;top:269px;width:126px;height:17px;background:#add8e6"></div>
<div class="cb" style="left:781px;top:270px;width:13px;height:13px"></div>
<div class="t" style="left:801px;top:272.5px;font-size:10.4px;font-style:italic">Flag for future review</div>
<!-- PLOT box -->
<div class="a" style="left:671px;top:289px;width:339px;height:82px;background:#f0ffff;border-top:2px solid #707070;border-left:2px solid #707070;border-right:1px solid #dcdcdc;border-bottom:1px solid #dcdcdc"></div>
<div class="t" style="left:679px;top:306px;font-size:11.5px;font-weight:bold;color:#800000;line-height:13px;text-align:center;width:10px">P<br>L<br>O<br>T</div>
<div class="t" style="left:699px;top:303px;font-size:11.9px;font-weight:bold;color:#800000">Scale</div>
<div class="a" style="left:738px;top:298px;width:269px;height:19px;background:#fff8d0"></div>
<div class="a" style="left:743px;top:303px;width:258px;height:4px;background:#e6e6e6;border:1px solid #d6d6d6"></div>
<div class="a" style="left:746.0px;top:313px;width:1px;height:3px;background:#a0a0a0"></div>
<div class="a" style="left:758.6px;top:313px;width:1px;height:3px;background:#a0a0a0"></div>
<div class="a" style="left:771.2px;top:313px;width:1px;height:3px;background:#a0a0a0"></div>
<div class="a" style="left:783.8px;top:313px;width:1px;height:3px;background:#a0a0a0"></div>
<div class="a" style="left:796.4px;top:313px;width:1px;height:3px;background:#a0a0a0"></div>
<div class="a" style="left:809.0px;top:313px;width:1px;height:3px;background:#a0a0a0"></div>
<div class="a" style="left:821.6px;top:313px;width:1px;height:3px;background:#a0a0a0"></div>
<div class="a" style="left:834.2px;top:313px;width:1px;height:3px;background:#a0a0a0"></div>
<div class="a" style="left:846.8px;top:313px;width:1px;height:3px;background:#a0a0a0"></div>
<div class="a" style="left:859.4px;top:313px;width:1px;height:3px;background:#a0a0a0"></div>
<div class="a" style="left:872.0px;top:313px;width:1px;height:3px;background:#a0a0a0"></div>
<div class="a" style="left:884.6px;top:313px;width:1px;height:3px;background:#a0a0a0"></div>
<div class="a" style="left:897.2px;top:313px;width:1px;height:3px;background:#a0a0a0"></div>
<div class="a" style="left:909.8px;top:313px;width:1px;height:3px;background:#a0a0a0"></div>
<div class="a" style="left:922.4px;top:313px;width:1px;height:3px;background:#a0a0a0"></div>
<div class="a" style="left:935.0px;top:313px;width:1px;height:3px;background:#a0a0a0"></div>
<div class="a" style="left:947.6px;top:313px;width:1px;height:3px;background:#a0a0a0"></div>
<div class="a" style="left:960.2px;top:313px;width:1px;height:3px;background:#a0a0a0"></div>
<div class="a" style="left:972.8px;top:313px;width:1px;height:3px;background:#a0a0a0"></div>
<div class="a" style="left:985.4px;top:313px;width:1px;height:3px;background:#a0a0a0"></div>
<div class="a" style="left:998.0px;top:313px;width:1px;height:3px;background:#a0a0a0"></div>
<svg class="a" style="left:869px;top:300px" width="7" height="11" viewBox="0 0 7 11"><path d="M0.5 1Q0.5 0.5 1 0.5H6Q6.5 0.5 6.5 1V7.5L3.5 10.5L0.5 7.5Z" fill="#0078d7"/></svg>
<div class="t" style="left:699px;top:329px;font-size:11.9px;font-weight:bold;color:#800000">Size</div>
<div class="a" style="left:729px;top:323px;width:163px;height:23px;background:#f0fff0;border-top:2px solid #707070;border-left:2px solid #707070;border-right:1px solid #e0e0e0;border-bottom:1px solid #e0e0e0"></div>
<div class="rb" style="left:739px;top:328px;border:3.5px solid #005fb8;background:#fff"></div>
<div class="t" style="left:757px;top:330px;font-size:11.9px;font-weight:bold;color:#800000">normal</div>
<div class="rb" style="left:803px;top:328px"></div>
<div class="t" style="left:821px;top:330px;font-size:11.9px;font-weight:bold;color:#800000">x 2</div>
<div class="rb" style="left:847px;top:328px"></div>
<div class="t" style="left:865px;top:330px;font-size:11.9px;font-weight:bold;color:#800000">x 5</div>
<div class="t" style="left:915px;top:330px;font-size:11.3px;font-weight:bold;color:#800080">Form opacity</div>
<div class="t" style="left:700px;top:355px;font-size:11.9px;font-weight:bold;color:#800000">Scroll range x1.25</div>
<div class="cb" style="left:811px;top:353px"></div>
<div class="a" style="left:893px;top:346px;width:115px;height:21px;background:#fff8d0"></div>
<div class="a" style="left:899px;top:352px;width:102px;height:4px;background:#e6e6e6;border:1px solid #d6d6d6"></div>
<div class="a" style="left:903.2px;top:362px;width:1px;height:4px;background:#a0a0a0"></div>
<div class="a" style="left:922.6px;top:362px;width:1px;height:4px;background:#a0a0a0"></div>
<div class="a" style="left:941.5px;top:362px;width:1px;height:4px;background:#a0a0a0"></div>
<div class="a" style="left:960.0px;top:362px;width:1px;height:4px;background:#a0a0a0"></div>
<div class="a" style="left:978.5px;top:362px;width:1px;height:4px;background:#a0a0a0"></div>
<div class="a" style="left:997.4px;top:362px;width:1px;height:4px;background:#a0a0a0"></div>
<svg class="a" style="left:992px;top:347px" width="9" height="13" viewBox="0 0 9 13"><path d="M0.5 1Q0.5 0.5 1 0.5H8Q8.5 0.5 8.5 1V9L4.5 12.5L0.5 9Z" fill="#0078d7"/></svg>
<!-- RMS -->
<div class="t" style="left:685px;top:384px;font-size:10.6px">RMS fit 1.9 ±4.8 km</div>
<!-- listbox -->
<div class="a" style="left:677px;top:402px;width:327px;height:269px;background:#fff;border-top:2px solid #707070;border-left:2px solid #707070;border-right:1px solid #fff;border-bottom:1px solid #fff"></div>
<div class="a" style="left:679px;top:654px;width:324px;height:16px;background:#f0f0f0"></div>
<div class="a" style="left:696px;top:661px;width:188px;height:2px;background:#858585;border-radius:1px"></div>
<div class="a" style="left:684px;top:410px;width:66px;height:2px;background:#400080"></div>
<div class="a" style="left:684px;top:422px;width:66px;height:2px;background:#ff0000"></div>
<div class="a" style="left:684px;top:434px;width:66px;height:2px;background:#0000ff"></div>
<div class="a" style="left:684px;top:446px;width:66px;height:2px;background:#8a2be2"></div>
<div class="a" style="left:684px;top:458px;width:66px;height:2px;background:#a01818"></div>
<div class="a" style="left:677px;top:402px;width:327px;height:269px;overflow:hidden">
<div class="t" style="left:96px;top:4.5px;font-family:'Liberation Mono',monospace;font-size:13.4px;white-space:pre;-webkit-text-stroke:0;color:#111">1    Hiroyuki Watanabe, near</div>
<div class="t" style="left:96px;top:16.5px;font-family:'Liberation Mono',monospace;font-size:13.4px;white-space:pre;-webkit-text-stroke:0;color:#111">2    Miyoshi Ida, near Higas</div>
<div class="t" style="left:96px;top:28.5px;font-family:'Liberation Mono',monospace;font-size:13.4px;white-space:pre;-webkit-text-stroke:0;color:#111">3    Akira Asai, near Inabe,</div>
<div class="t" style="left:96px;top:40.5px;font-family:'Liberation Mono',monospace;font-size:13.4px;white-space:pre;-webkit-text-stroke:0;color:#111">4    Masumi Takimoto, near K</div>
<div class="t" style="left:96px;top:52.5px;font-family:'Liberation Mono',monospace;font-size:13.4px;white-space:pre;-webkit-text-stroke:0;color:#111">5    Toshihiro Horikawa, nea</div>
<div class="t" style="left:96px;top:68.5px;font-family:'Liberation Mono',monospace;font-size:13.4px;white-space:pre;-webkit-text-stroke:0;color:#111">6(P) Predicted</div>
</div>
<div class="a" style="left:685.0px;top:474px;width:3px;height:3px;border-radius:50%;background:#333"></div>
<div class="a" style="left:700.0px;top:474px;width:3px;height:3px;border-radius:50%;background:#333"></div>
<div class="a" style="left:715.0px;top:474px;width:3px;height:3px;border-radius:50%;background:#333"></div>
<div class="a" style="left:730.0px;top:474px;width:3px;height:3px;border-radius:50%;background:#333"></div>
<div class="a" style="left:745.0px;top:474px;width:3px;height:3px;border-radius:50%;background:#333"></div>

</body></html>
